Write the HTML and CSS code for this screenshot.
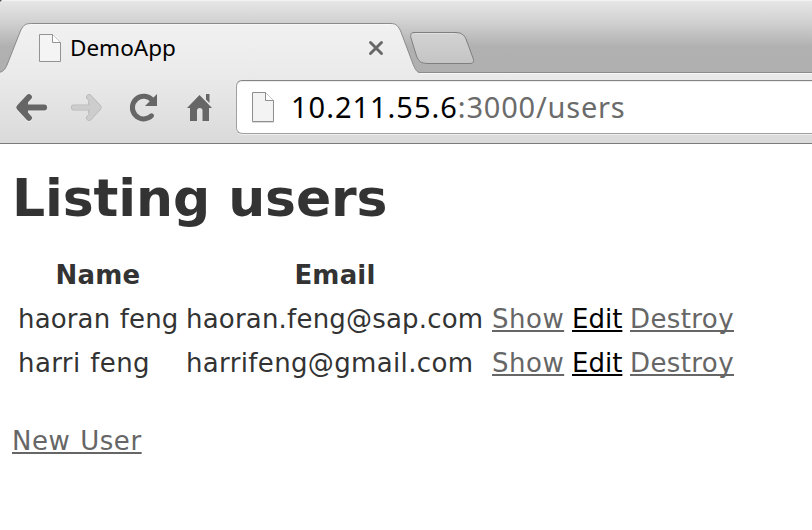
FILE: index.html
```html
<!DOCTYPE html>
<html lang="en">
<head>
<meta charset="utf-8">
<title>DemoApp</title>
<link rel="stylesheet" href="styles.css">
</head>
<body>
<header class="chrome">
  <svg class="chrome-shape" width="812" height="144" viewBox="0 0 812 144" aria-hidden="true">
    <defs>
      <linearGradient id="strip" x1="0" y1="0" x2="0" y2="72" gradientUnits="userSpaceOnUse">
        <stop offset="0" stop-color="#e7e7e7"/><stop offset=".28" stop-color="#d3d3d3"/>
        <stop offset=".65" stop-color="#b1b1b1"/><stop offset="1" stop-color="#afafaf"/>
      </linearGradient>
      <linearGradient id="bar" x1="0" y1="24" x2="0" y2="143" gradientUnits="userSpaceOnUse">
        <stop offset="0" stop-color="#f1f1f1"/><stop offset=".4" stop-color="#ebebeb"/><stop offset="1" stop-color="#dadada"/>
      </linearGradient>
      <linearGradient id="newtab" x1="0" y1="32" x2="0" y2="64" gradientUnits="userSpaceOnUse">
        <stop offset="0" stop-color="#d3d3d3"/><stop offset="1" stop-color="#c4c4c4"/>
      </linearGradient>
    </defs>
    <rect width="812" height="73" fill="url(#strip)"/>
    <rect width="812" height="1" fill="#f3f3f3"/>
    <path d="M0 0H2L0 2Z" fill="#555"/>
    <path d="M-3 72.5C3 72.5 5 69.500 7 65L20 32C22.500 26 25 23.500 30.500 23.500H391C396 23.500 398.500 26 401 32L413 64C415.500 70 417 72.500 420 72.500H815V146H-3Z" fill="url(#bar)" stroke="#8b8b8b"/>
    <path d="M31 24.500H391M420 73.500H812" stroke="#f8f8f8"/>
    <path d="M414 32.500H455C461 32.500 464 34.500 466 39L473 58C474.500 61.500 473 63.500 470 63.500H428C421 63.500 418.500 61 416.500 56L411 38C410 34.500 411 32.500 414 32.500Z" fill="url(#newtab)" stroke="#7f7f7f"/>
    <path d="M415 33.500H455" stroke="#e0e0e0"/>
    <path d="M0 143.500H812" stroke="#7b7b7b"/>
  </svg>
  <div class="tab">
    <svg class="tab-page" width="24" height="30" viewBox="0 0 24 30"><path d="M1.500 1.500H14.500L22.500 9.500V28.500H1.500Z" fill="#f4f4f4" stroke="#939393"/><path d="M14.500 1.500V9.500H22.500" fill="#fff" stroke="#939393"/></svg>
    <span class="tab-title">DemoApp</span>
    <svg class="tab-close" width="16" height="16" viewBox="0 0 16 16"><path d="M2.500 2.500L13.500 13.500M13.500 2.500L2.500 13.500" stroke="#686868" stroke-width="2.900" stroke-linecap="round"/></svg>
  </div>
  <div class="toolbar">
    <svg class="tools" width="236" height="70" viewBox="0 73 236 70" fill="none">
      <path d="M44 108.500H22M29 98L19 108.500L29 119" stroke="#fafafa" stroke-width="5.600" stroke-linecap="round" stroke-linejoin="round" opacity=".7"/>
      <path d="M44.200 107.500H22M29 97L19.200 107.500L29 118" stroke="#666" stroke-width="5.800" stroke-linecap="round" stroke-linejoin="round"/>
      <path d="M19 107.500L28 99.500V115.500Z" fill="#666"/>
      <path d="M73.800 107.500H96M89 97L98.800 107.500L89 118M91 103L96 107.500L91 112" stroke="#b8b8b8" stroke-width="5.800" stroke-linecap="round" stroke-linejoin="round"/>
      <path d="M73.800 107.500H96M89 97L98.800 107.500L89 118M91 103L96 107.500L91 112" stroke="#cdcdcd" stroke-width="4.400" stroke-linecap="round" stroke-linejoin="round"/>
      <path d="M151.500 115.800A11.300 11.300 0 1 1 152.500 100.500" stroke="#666" stroke-width="5" stroke-linecap="round"/>
      <path d="M157 94V106H145Z" fill="#666"/>
      <path d="M187 108L199.500 95L212 108H209V121H202.500V110.500Q202.500 108 199.800 108T197 110.500V121H190V108ZM206 94H209.500V103L206 99.500Z" fill="#666"/>
    </svg>
    <div class="address">
      <svg width="24" height="33" viewBox="0 0 24 33"><path d="M1 31.500H23" stroke="#ddd"/><path d="M1.500 1.500H14.500L22.500 9.500V30.500H1.500Z" fill="#f3f3f3" stroke="#8e8e8e"/><path d="M14.500 1.500V9.500H22.500" fill="#fff" stroke="#8e8e8e"/></svg>
      <span class="url"><span class="host">10.211.55.6</span><span class="path">:3000/users</span></span>
    </div>
  </div>
</header>
<main class="page">
  <h1>Listing users</h1>
  <table class="users">
    <colgroup><col class="c-name"><col class="c-email"><col class="c-show"><col class="c-edit"><col class="c-destroy"></colgroup>
    <thead><tr><th>Name</th><th>Email</th><th></th><th></th><th></th></tr></thead>
    <tbody>
      <tr><td class="name">haoran feng</td><td class="email">haoran.feng@sap.com</td><td><a class="show">Show</a></td><td><a class="edit">Edit</a></td><td><a class="destroy">Destroy</a></td></tr>
      <tr><td class="name short">harri feng</td><td class="email short">harrifeng@gmail.com</td><td><a class="show">Show</a></td><td><a class="edit">Edit</a></td><td><a class="destroy">Destroy</a></td></tr>
    </tbody>
  </table>
  <a class="new-user">New User</a>
</main>
</body>
</html>
```
FILE: styles.css
```css
* { box-sizing: border-box; }
body {
  margin: 0;
  width: 812px;
  height: 530px;
  overflow: hidden;
  background: #fff;
  color: #333;
  font: 26px/36px "DejaVu Sans", sans-serif;
}
svg { display: block; flex: none; }
.chrome { position: relative; height: 144px; }
.chrome-shape { position: absolute; inset: 0; z-index: -1; }
.tab {
  display: flex;
  align-items: center;
  width: 422px;
  height: 73px;
  padding: 23px 38px 0;
}
.tab-page { margin-top: -1px; }
.tab-title {
  flex: 1;
  margin: 0 0 0 8px;
  color: #000;
  font: 22.5px/30px "Noto Sans", sans-serif;
  letter-spacing: 0;
}
.tab-close { margin-top: 0; }
.toolbar { display: flex; height: 70px; }
.address {
  display: flex;
  flex: 1;
  align-items: center;
  gap: 16px;
  height: 54px;
  margin-top: 7px;
  padding-left: 14px;
  border: 1px solid #a0a0a0;
  border-top-color: #858585;
  border-right: 0;
  border-radius: 6px 0 0 6px;
  background: #fff;
  box-shadow: inset 0 1px #ededed, 0 1px #efefef;
}
.url { font: 29px/40px "Noto Sans", sans-serif; white-space: nowrap; }
.host { color: #000; letter-spacing: .98px; }
.path { color: #6b6b6b; letter-spacing: .8px; }
.page { padding: 36px 12px 0; }
h1 {
  margin: 0 0 35px;
  font-size: 52px;
  line-height: 36px;
  letter-spacing: -.1px;
}
.users {
  table-layout: fixed;
  width: 728px;
  border-collapse: separate;
  border-spacing: 4px;
}
.users th, .users td { height: 40px; padding: 2px; line-height: 36px; white-space: nowrap; }
.users th { letter-spacing: .2px; }
.users td { text-align: left; }
.c-name { width: 164px; }
.c-email { width: 302px; }
.c-show { width: 76px; }
.c-edit { width: 54px; }
.c-destroy { width: 108px; }
.name { letter-spacing: .15px; word-spacing: 1px; }
.name.short { letter-spacing: .4px; }
.email { letter-spacing: .2px; }
.email.short { letter-spacing: .35px; }
a {
  color: #666;
  text-decoration: underline;
  text-decoration-thickness: 2px;
  text-underline-offset: 2px;
  text-decoration-skip-ink: none;
}
.show { letter-spacing: .5px; }
.edit { color: #000; }
.destroy { letter-spacing: .4px; }
.new-user { display: inline-block; margin-top: 36px; letter-spacing: .55px; word-spacing: 1px; }
```
